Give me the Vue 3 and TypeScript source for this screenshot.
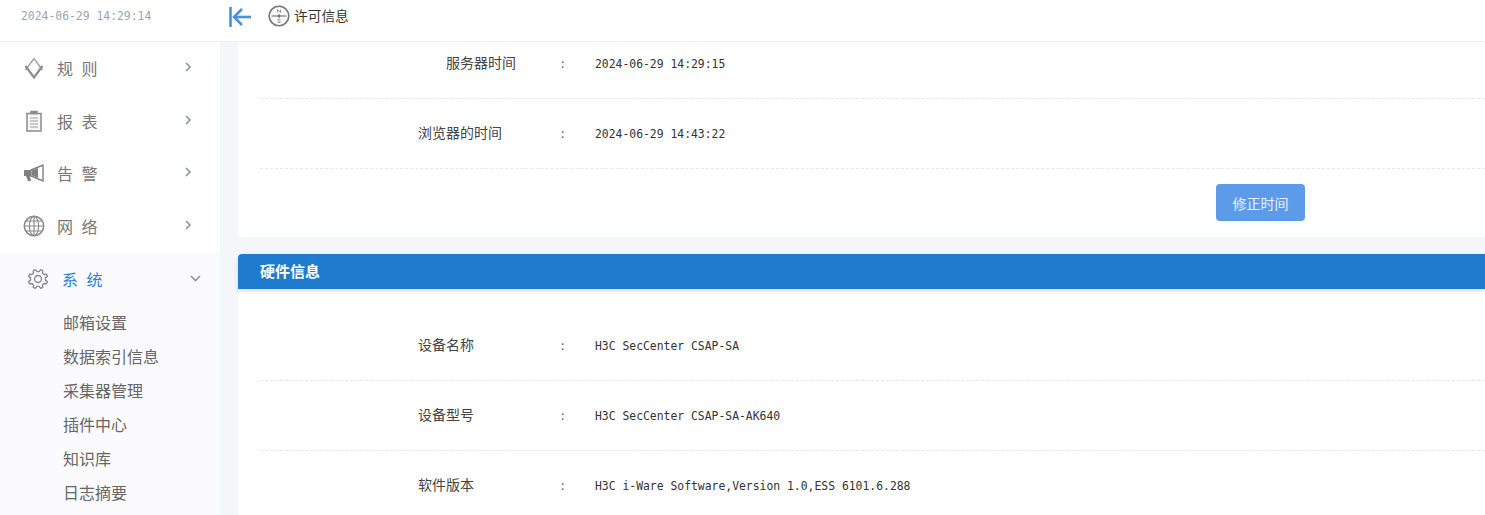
<script setup lang="ts">
interface Row { label: string; value: string; indent?: boolean }
const menus = [
  { key: 'rule', label: '规 则' },
  { key: 'report', label: '报 表' },
  { key: 'alarm', label: '告 警' },
  { key: 'net', label: '网 络' },
]
const subs = ['邮箱设置', '数据索引信息', '采集器管理', '插件中心', '知识库', '日志摘要']
const timeRows: Row[] = [
  { label: '服务器时间', value: '2024-06-29 14:29:15', indent: true },
  { label: '浏览器的时间', value: '2024-06-29 14:43:22' },
]
const hwRows: Row[] = [
  { label: '设备名称', value: 'H3C SecCenter CSAP-SA' },
  { label: '设备型号', value: 'H3C SecCenter CSAP-SA-AK640' },
  { label: '软件版本', value: 'H3C i-Ware Software,Version 1.0,ESS 6101.6.288' },
]
function gearPath(): string {
  const pts: string[] = []
  const teeth = 8
  for (let i = 0; i < teeth; i++) {
    const a = (i / teeth) * Math.PI * 2 + Math.PI / 8
    const step = Math.PI / teeth
    const list: [number, number][] = [
      [8.2, a - step * 0.62],
      [10.6, a - step * 0.3],
      [10.6, a + step * 0.3],
      [8.2, a + step * 0.62],
    ]
    for (const [r, t] of list) {
      pts.push(`${(12 + r * Math.cos(t)).toFixed(2)} ${(12 + r * Math.sin(t)).toFixed(2)}`)
    }
  }
  return 'M' + pts.join('L') + 'Z'
}
const gear = gearPath()
</script>

<template>
  <div class="app">
    <header class="top">
      <div class="clock">2024-06-29 14:29:14</div>
      <svg class="collapse" width="22" height="20" viewBox="0 0 22 20" fill="none" stroke="#4a90dc" stroke-width="2.6">
        <path d="M1.500 0v20" />
        <path d="M13 2 5 10l8 8" />
        <path d="M5 10h17" />
      </svg>
      <svg class="compass" width="22" height="22" viewBox="0 0 22 22" fill="none" stroke="#777">
        <circle cx="11" cy="11" r="9.800" stroke-width="1.600" />
        <path d="M3.500 11h15" stroke-width="1.200" />
        <path d="M11 8.500 9.500 11h3z M11 13.500 9.500 11h3z" fill="#777" stroke="none" />
        <path d="M9.500 7.500V4.600l3 2.900V4.600" stroke-width=".8" />
        <path d="M12.500 14.600c-1-.8-3-.5-2.800.6.2 1 2.900.6 2.800 1.700-.2 1-2.100 1-3 .3" stroke-width=".8" />
      </svg>
      <span class="crumb">许可信息</span>
    </header>

    <div class="body">
      <aside class="side">
        <div v-for="m in menus" :key="m.key" class="item">
          <svg v-if="m.key === 'rule'" class="ico" width="22" height="22" viewBox="0 0 22 22" fill="none" stroke="#8c8c8c" stroke-width="1.700">
            <path d="M2.500 13 11 1.500 19.500 13" stroke-width="1.300" stroke="#9a9a9a" />
            <path d="M2.500 9 11 20.500 19.500 9" stroke-width="2.200" />
          </svg>
          <svg v-else-if="m.key === 'report'" class="ico" width="22" height="22" viewBox="0 0 22 22" fill="none" stroke="#8a8a8a" stroke-width="1.500">
            <rect x="4" y="3.500" width="14" height="17.500" fill="#f6f6f6" />
            <path d="M8 3.500V1.500h6v2z" fill="#8a8a8a" />
            <path d="M7 8h8M7 11h8M7 14h8M7 17h8" stroke-width="1.100" stroke="#a0a0a0" />
          </svg>
          <svg v-else-if="m.key === 'alarm'" class="ico" width="22" height="22" viewBox="0 0 22 22" fill="#808080">
            <path d="M1 8h7v6H1z" />
            <path d="M8 8 20 3v16L8 14z" fill="none" stroke="#808080" stroke-width="1.400" />
            <path d="M9 8.500 15 6v10l-6-2.500z" />
            <path d="M3 14h4l1 5H5z" />
          </svg>
          <svg v-else class="ico" width="22" height="22" viewBox="0 0 22 22" fill="none" stroke="#8a8a8a" stroke-width="1.200">
            <circle cx="11" cy="11" r="9.700" stroke-width="1.500" />
            <ellipse cx="11" cy="11" rx="4.600" ry="9.700" />
            <path d="M11 1.300v19.400M1.300 11h19.400M2.800 6h16.400M2.800 16h16.400" />
          </svg>
          <span class="name">{{ m.label }}</span>
          <svg class="chev" width="7" height="10" viewBox="0 0 7 10" fill="none" stroke="#8b949c" stroke-width="1.600"><path d="m1 1 4 4-4 4" /></svg>
        </div>

        <div class="group">
          <div class="item open">
            <svg class="ico" width="22" height="22" viewBox="0 0 24 24" fill="none" stroke="#8a8a8a" stroke-width="1.500" stroke-linejoin="round">
              <path :d="gear" />
              <circle cx="12" cy="12" r="3.800" />
            </svg>
            <span class="name">系 统</span>
            <svg class="chev down" width="11" height="7" viewBox="0 0 11 7" fill="none" stroke="#8b949c" stroke-width="1.600"><path d="m1 1 4.500 4.500L10 1" /></svg>
          </div>
          <div v-for="s in subs" :key="s" class="sub">{{ s }}</div>
        </div>
      </aside>

      <main class="main">
        <div class="scroller">
          <section class="card first">
            <div v-for="r in timeRows" :key="r.label" class="row">
              <span class="label" :class="{ indent: r.indent }">{{ r.label }}</span>
              <span class="colon">:</span>
              <span class="value">{{ r.value }}</span>
            </div>
            <div class="actions"><button class="btn" type="button">修正时间</button></div>
          </section>

          <section class="card second">
            <h2 class="title">硬件信息</h2>
            <div class="rows">
              <div v-for="r in hwRows" :key="r.label" class="row">
                <span class="label">{{ r.label }}</span>
                <span class="colon">:</span>
                <span class="value">{{ r.value }}</span>
              </div>
            </div>
          </section>
        </div>
      </main>
    </div>
  </div>
</template>

<style>
html, body { margin: 0; background: #fff; overflow: hidden; }
</style>

<style scoped>
.app {
  width: 1485px;
  height: 515px;
  overflow: hidden;
  display: flex;
  flex-direction: column;
  font-family: "Noto Sans CJK SC", "Liberation Sans", sans-serif;
  color: #333;
}
.top {
  flex: none;
  box-sizing: border-box;
  display: flex;
  align-items: flex-start;
  background: #fff;
  border-bottom: 1px solid #eef0f2;
  height: 42px;
}
.clock {
  width: 208px;
  padding: 9px 0 0 21px;
  font: 11.400px/14px "DejaVu Sans Mono", monospace;
  color: #9aa6b2;
}
.collapse { margin-top: 7px; }
.compass { margin: 5px 0 0 17px; }
.crumb {
  margin: 5px 0 0 4px;
  font-size: 13.700px;
  line-height: 20px;
  color: #333;
}
.body { flex: 1; min-height: 0; display: flex; }
.side {
  width: 220px;
  flex: none;
  background: #fff;
  display: flex;
  flex-direction: column;
}
.item {
  height: 52.500px;
  flex: none;
  display: flex;
  align-items: center;
  padding-left: 23px;
  position: relative;
  box-sizing: border-box;
}
.ico { flex: none; }
.name {
  margin-left: 12px;
  font-size: 16px;
  letter-spacing: 2.500px;
  color: #777;
  white-space: pre;
}
.chev { position: absolute; left: 185px; top: 20px; }
.group { background: #fbfbfd; flex: 1; }
.open { padding-left: 27px; padding-top: 1px; }
.open .name { margin-left: 13px; color: #2a80d2; }
.chev.down { left: 190px; top: 23px; }
.sub {
  height: 34px;
  line-height: 34px;
  padding-left: 63px;
  font-size: 16px;
  color: #666;
}
.main {
  flex: 1;
  min-width: 0;
  background: #f5f6fa;
  padding-left: 18px;
  overflow: hidden;
}
.scroller { margin-top: -13px; }
.card { background: #fff; border-radius: 4px 0 0 4px; }
.first { padding-left: 22px; height: 208px; box-sizing: border-box; }
.second { margin-top: 17px; border-radius: 4px 0 0 0; }
.rows { padding: 22px 0 0 22px; }
.row {
  height: 70px;
  box-sizing: border-box;
  border-bottom: 1px dashed #e6e8eb;
  display: flex;
  align-items: center;
  padding-left: 158px;
  padding-bottom: 3px;
}
.label { width: 145px; font-size: 14px; color: #444; flex: none; box-sizing: border-box; }
.label.indent { padding-left: 28px; }
.colon { width: 34px; margin-left: -2px; font-size: 12px; flex: none; color: #555; }
.value { padding-top: 4px; font: 11.400px/14px "DejaVu Sans Mono", monospace; color: #333; white-space: pre; }
.actions { display: flex; justify-content: flex-end; padding: 15px 180px 0 0; }
.btn {
  width: 89px;
  height: 37px;
  border: 0;
  border-radius: 4px;
  background: #5d9be9;
  color: #e8f1fd;
  font: 14px "Noto Sans CJK SC", sans-serif;
  padding: 0;
}
.title {
  margin: 0;
  height: 35px;
  line-height: 33px;
  padding-left: 22px;
  background: #1e7bcd;
  color: #fff;
  font-size: 15px;
  font-weight: 700;
  border-radius: 4px 0 0 0;
  box-shadow: 0 2px 4px rgba(0, 0, 0, .15);
}
</style>
